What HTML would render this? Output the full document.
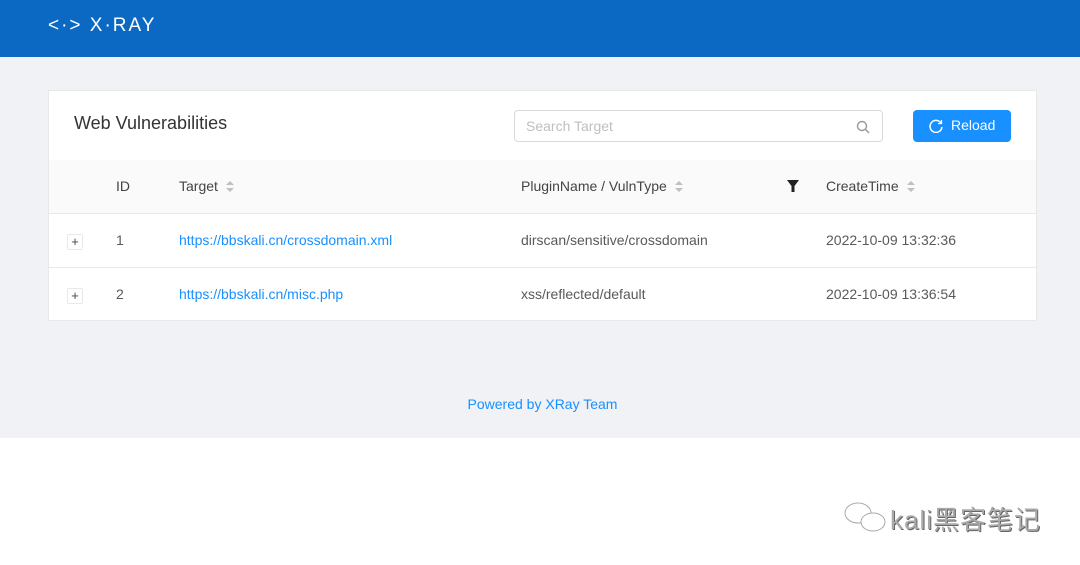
<!DOCTYPE html>
<html><head><meta charset="utf-8"><style>
*{margin:0;padding:0;box-sizing:border-box}
body{width:1080px;height:565px;background:#fff;font-family:"Liberation Sans","Noto Sans CJK SC",sans-serif;position:relative;overflow:hidden;color:#595959}
.hdr{position:absolute;left:0;top:0;width:1080px;height:57px;background:#0b69c4}
.logo{position:absolute;left:48px;top:15px;color:#fff;font-size:19px;letter-spacing:2px}
.bg{position:absolute;left:0;top:57px;width:1080px;height:381px;background:#f0f2f5}
.card{position:absolute;left:48px;top:90px;width:989px;height:231px;background:#fff;border:1px solid #e8e8e8}
.title{position:absolute;left:25px;top:22px;font-size:18px;color:#333}
.search{position:absolute;left:465px;top:19px;width:369px;height:32px;border:1px solid #d9d9d9;border-radius:4px;font-size:14px;color:#bfbfbf;padding:7px 11px}
.btn{position:absolute;left:864px;top:19px;width:98px;height:32px;background:#1890ff;border-radius:4px;color:#fff;font-size:14px;padding:7px 0 0 38px}
.thead{position:absolute;left:0;top:69px;width:987px;height:54px;background:#fafafa;border-bottom:1px solid #e8e8e8}
.row{position:absolute;left:0;width:987px;height:54px;border-bottom:1px solid #e8e8e8}
.c{position:absolute;font-size:14px;top:18px;white-space:nowrap}
.h{color:#444}
a{color:#1890ff;text-decoration:none}
.sort{display:inline-block;width:8px;height:12px;vertical-align:middle;margin-left:8px;position:relative}
.sort:before{content:"";position:absolute;top:0;left:0;border:4px solid transparent;border-bottom-color:#bfbfbf;border-top:0}
.sort:after{content:"";position:absolute;top:7px;left:0;border:4px solid transparent;border-top-color:#bfbfbf;border-bottom:0}
.plus{position:absolute;left:18px;top:20px;width:16px;height:16px;border:1px solid #e8e8e8;border-radius:2px;font-size:13px;line-height:14px;text-align:center;color:#444}
.foot{position:absolute;left:0;top:396px;width:1085px;text-align:center;font-size:14px;color:#1890ff}
.wm{position:absolute;left:842px;top:500px;font-size:26px;color:#aaa;letter-spacing:1px;text-shadow:1px 1px 0 #666}
</style></head><body>
<div class="hdr"><div class="logo">&lt;·&gt; X·RAY</div></div>
<div class="bg"></div>
<div class="card">
<div class="title">Web Vulnerabilities</div>
<div class="search">Search Target
<svg style="position:absolute;right:12px;top:9px" width="14" height="14" viewBox="0 0 14 14"><circle cx="6" cy="6" r="4.5" fill="none" stroke="#999" stroke-width="1.4"/><path d="M9.5 9.5L13 13" stroke="#999" stroke-width="1.5"/></svg></div>
<div class="btn"><svg style="position:absolute;left:16px;top:9px" width="14" height="14" viewBox="0 0 14 14"><path d="M12 4A6 6 0 1 0 13 8" fill="none" stroke="#fff" stroke-width="1.5"/><path d="M12.5 1v3.5H9" fill="none" stroke="#fff" stroke-width="1.3"/></svg>Reload</div>
<div class="thead">
<div class="c h" style="left:67px">ID</div>
<div class="c h" style="left:130px">Target<span class="sort"></span></div>
<div class="c h" style="left:472px">PluginName / VulnType<span class="sort"></span></div>
<svg style="position:absolute;left:738px;top:20px" width="12" height="12" viewBox="0 0 12 12"><path d="M0 0H12L7.5 6V12H4.5V6Z" fill="#222"/></svg>
<div class="c h" style="left:777px">CreateTime<span class="sort"></span></div>
</div>
<div class="row" style="top:123px"><div class="plus">+</div>
<div class="c" style="left:67px">1</div><div class="c" style="left:130px"><a>https://bbskali.cn/crossdomain.xml</a></div><div class="c" style="left:472px">dirscan/sensitive/crossdomain</div><div class="c" style="left:777px">2022-10-09 13:32:36</div></div>
<div class="row" style="top:177px;border-bottom:0"><div class="plus">+</div>
<div class="c" style="left:67px">2</div><div class="c" style="left:130px"><a>https://bbskali.cn/misc.php</a></div><div class="c" style="left:472px">xss/reflected/default</div><div class="c" style="left:777px">2022-10-09 13:36:54</div></div>
</div>
<div class="foot">Powered by XRay Team</div>
<div class="wm"><svg width="48" height="34" viewBox="0 0 48 34" style="vertical-align:-6px"><ellipse cx="16" cy="12" rx="13" ry="10" fill="none" stroke="#aaa"/><ellipse cx="31" cy="21" rx="12" ry="9" fill="#fff" stroke="#aaa"/></svg>kali黑客笔记</div>
</body></html>
